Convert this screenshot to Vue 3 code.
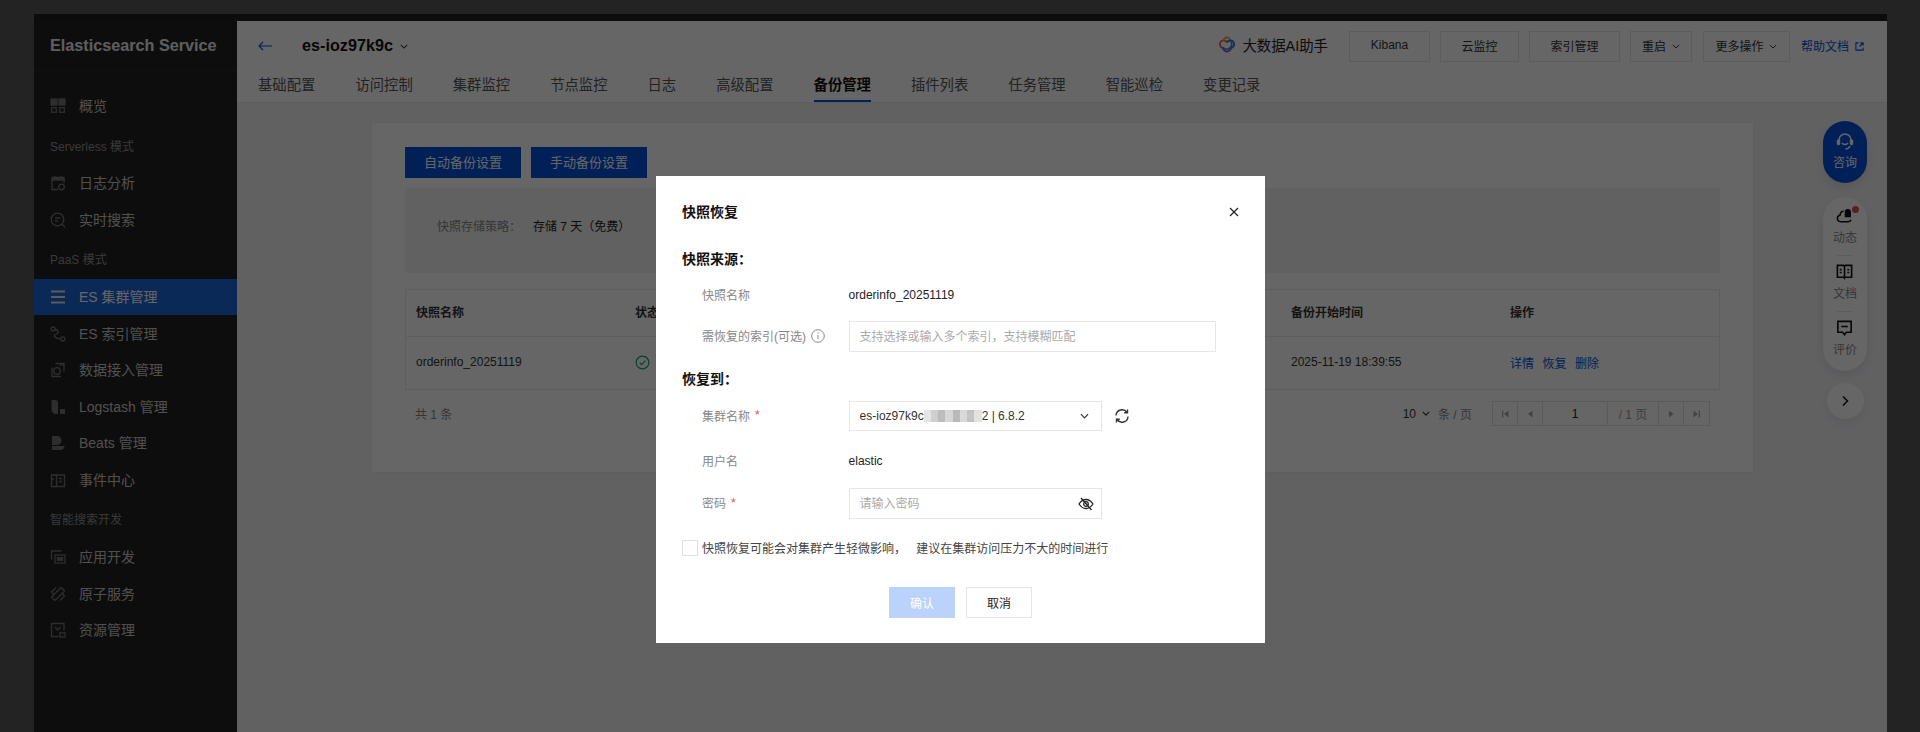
<script setup>
const icons = {
  grid: '<rect x="1" y="1" width="6" height="6" fill="currentColor"/><rect x="9" y="1" width="6" height="6" fill="currentColor"/><rect x="1.7" y="9.7" width="4.6" height="4.6"/><rect x="9.7" y="9.7" width="4.6" height="4.6"/>',
  calendar: '<path d="M2 4h12v4M2 4v10.5h6" /><path d="M2 2.5h12V5H2z" fill="currentColor"/><path d="M5 .8v2.5M11 .8v2.5"/><circle cx="11.5" cy="12" r="2.8"/>',
  search: '<circle cx="7.5" cy="7.5" r="6.3"/><path d="M12 12l3 3.4M5 6h5M5 9h3"/>',
  bars: '<path d="M1 2.5h14M1 8h14M1 13.5h14" stroke-width="2"/>',
  route: '<circle cx="3" cy="3" r="2"/><circle cx="12.8" cy="13" r="2"/><path d="M5 3.5C9 4 9 7 6 8c-3 1-2 4.500 4.800 5"/>',
  data: '<circle cx="7" cy="9" r="3.300"/><path d="M2 5.500v9h9M5.500 1.500H14v8M10 4l2-2.500 2 2.500"/>',
  logstash: '<path d="M1.500 1H5a3 3 0 0 1 3 3v11H6a4.500 4.500 0 0 1-4.500-4.500z" fill="currentColor" stroke="none"/><rect x="10" y="10" width="5" height="5" fill="currentColor" stroke="none"/>',
  beats: '<path d="M2 1h5a4.500 4.500 0 0 1 0 9H2zM2 11h12.500a3.800 3.800 0 0 1-3.800 4H2z" fill="currentColor" stroke="none"/>',
  event: '<path d="M1.500 3h13v11.500h-13zM6.500 3v11.500M9 6.500h3M9 9.500h3M1.500 7H4"/>',
  app: '<path d="M11.500 2H1.500v8.500"/><rect x="5" y="6" width="10" height="8"/><rect x="7.500" y="8.700" width="5" height="2.600" fill="currentColor"/>',
  atom: '<path d="M6 1.500 1.500 6l3 3M10 14.500 14.500 10l-3-3M1.500 11l9.500-9.500 3.500 3.500L5 14.500z"/>',
  resource: '<path d="M14 8.500V1.500H1.500v13H8.500M5 5l2.700 3L10.500 5"/><rect x="10" y="10.800" width="5" height="4.200"/>',
}

const navGroups = [
  { items: [{ label: '概览', icon: 'grid' }] },
  { title: 'Serverless 模式', items: [{ label: '日志分析', icon: 'calendar' }, { label: '实时搜索', icon: 'search' }] },
  {
    title: 'PaaS 模式',
    items: [
      { label: 'ES 集群管理', icon: 'bars', active: true },
      { label: 'ES 索引管理', icon: 'route' },
      { label: '数据接入管理', icon: 'data' },
      { label: 'Logstash 管理', icon: 'logstash' },
      { label: 'Beats 管理', icon: 'beats' },
      { label: '事件中心', icon: 'event' },
    ],
  },
  { title: '智能搜索开发', items: [{ label: '应用开发', icon: 'app' }, { label: '原子服务', icon: 'atom' }, { label: '资源管理', icon: 'resource' }] },
]

const tabs = ['基础配置', '访问控制', '集群监控', '节点监控', '日志', '高级配置', '备份管理', '插件列表', '任务管理', '智能巡检', '变更记录']
const mosaic = ['#e4e4e4', '#cfcfcf', '#bdbdbd', '#d6d6d6', '#b9b9b9', '#dadada', '#c4c4c4', '#e2e2e2']
</script>

<template>
  <div class="page">
    <div class="window">
      <div class="strip"></div>
      <div class="shell">
        <aside class="sidebar">
          <div class="brand">Elasticsearch Service</div>
          <nav class="nav">
            <div v-for="(group, i) in navGroups" :key="i" class="nav-group">
              <div v-if="group.title" class="nav-title">{{ group.title }}</div>
              <div v-for="item in group.items" :key="item.label" class="nav-item" :class="{ active: item.active }">
                <svg class="nav-icon" viewBox="0 0 16 16" fill="none" stroke="currentColor" stroke-width="1.300" v-html="icons[item.icon]"></svg>
                <span>{{ item.label }}</span>
              </div>
            </div>
          </nav>
        </aside>

        <main class="main">
          <header class="header">
            <div class="top-row">
              <svg class="back" viewBox="0 0 14 10" fill="none" stroke="currentColor" stroke-width="1.100"><path d="M14 5H1M5 1 1 5l4 4" /></svg>
              <span class="instance">es-ioz97k9c</span>
              <svg class="chev inst-chev" viewBox="0 0 10 6" fill="none" stroke="currentColor" stroke-width="1.300"><path d="M1 1l4 4 4-4" /></svg>
              <div class="top-actions">
                <svg class="ai-logo" viewBox="0 0 20 20" fill="none" stroke-width="1.800">
                  <path d="M10 6.500A3.800 3.800 0 1 0 6 12" stroke="#e8604c" />
                  <path d="M6.500 5A3.500 3.500 0 0 1 13.500 5" stroke="#f0a33a" />
                  <path d="M10 6.500A3.800 3.800 0 1 1 14 12" stroke="#2d6ee8" />
                  <path d="M6 11.500a4 4 0 1 0 8 0" stroke="#8a4fd8" />
                  <path d="M13.500 5a4 4 0 0 1-7.500 6.500" stroke="#3f7fe0" />
                </svg>
                <span class="ai-text">大数据AI助手</span>
                <button class="btn kibana"><span>Kibana</span></button>
                <button class="btn monitor"><span>云监控</span></button>
                <button class="btn index"><span>索引管理</span></button>
                <button class="btn restart"><span>重启</span><svg class="chev" viewBox="0 0 10 6" fill="none" stroke="currentColor" stroke-width="1.200"><path d="M1 1l4 4 4-4" /></svg></button>
                <button class="btn more"><span>更多操作</span><svg class="chev" viewBox="0 0 10 6" fill="none" stroke="currentColor" stroke-width="1.200"><path d="M1 1l4 4 4-4" /></svg></button>
                <a class="help"><span>帮助文档</span><svg class="ext" viewBox="0 0 10 10" fill="none" stroke="currentColor" stroke-width="1.200"><path d="M4 1H1v8h8V6M5 5l4-4M6 1h3v3" /></svg></a>
              </div>
            </div>
            <div class="tabs">
              <div v-for="tab in tabs" :key="tab" class="tab" :class="{ on: tab === '备份管理' }">{{ tab }}</div>
            </div>
          </header>

          <section class="body">
            <div class="card">
              <div class="card-actions">
                <button class="primary">自动备份设置</button>
                <button class="primary">手动备份设置</button>
              </div>
              <div class="policy">
                <span class="policy-label">快照存储策略：</span>
                <span class="policy-value">存储 7 天（免费）</span>
              </div>
              <div class="table">
                <div class="t-row t-head">
                  <div>快照名称</div>
                  <div>状态</div>
                  <div>备份开始时间</div>
                  <div>操作</div>
                </div>
                <div class="t-row t-data">
                  <div>orderinfo_20251119</div>
                  <div class="status">
                    <svg viewBox="0 0 16 16" fill="none" stroke="#00a870" stroke-width="1.200"><circle cx="8" cy="8" r="6.800" /><path d="M5 8.200l2.200 2.200L11 6" /></svg>
                  </div>
                  <div>2025-11-19 18:39:55</div>
                  <div class="links"><a>详情</a><a>恢复</a><a>删除</a></div>
                </div>
              </div>
              <div class="pager-row">
                <span class="total">共 1 条</span>
                <div class="pager-right">
                  <span class="size">10<svg class="chev" viewBox="0 0 10 6" fill="none" stroke="currentColor" stroke-width="1.500"><path d="M1 1l4 4 4-4" /></svg></span>
                  <span class="size-unit">条 / 页</span>
                  <div class="pager">
                    <div class="p-btn"><svg viewBox="0 0 10 10" fill="currentColor"><path d="M2 1.500h1.300v7H2zM8.500 1.500v7L4 5z" /></svg></div>
                    <div class="p-btn"><svg viewBox="0 0 10 10" fill="currentColor"><path d="M7.500 1.500v7L3 5z" /></svg></div>
                    <div class="p-input">1</div>
                    <div class="p-total">/ 1 页</div>
                    <div class="p-btn"><svg viewBox="0 0 10 10" fill="currentColor"><path d="M3 1.500v7L7.500 5z" /></svg></div>
                    <div class="p-btn"><svg viewBox="0 0 10 10" fill="currentColor"><path d="M8 1.500H6.700v7H8zM1.500 1.500v7L6 5z" /></svg></div>
                  </div>
                </div>
              </div>
            </div>
          </section>
        </main>
      </div>
    </div>

    <!-- right floating rail -->
    <div class="rail">
      <div class="consult">
        <svg viewBox="0 0 20 20" fill="none" stroke="currentColor" stroke-width="1.500">
          <path d="M4 9V8a6 6 0 0 1 12 0v4" />
          <rect x="2.500" y="8" width="2" height="4.500" rx="1" fill="currentColor" />
          <rect x="15.500" y="8" width="2" height="4.500" rx="1" fill="currentColor" />
          <path d="M7 11c1.500 2 4.500 2 6 0M15 14c-1 2.500-3 3-4.500 3" />
        </svg>
        <span>咨询</span>
      </div>
      <div class="rail-menu">
        <div class="rail-item">
          <span class="dot"></span>
          <svg viewBox="0 0 20 20" fill="none" stroke="currentColor" stroke-width="1.600">
            <path d="M9 5.500C6.500 5.500 5.500 7.500 5.500 9.500 3.500 10 2.500 11.500 2.500 13c0 2 1.500 3.500 3.500 3.500h8c1.500 0 2.500-1 3-2" />
            <path d="M11 10V6.500a2.500 2.500 0 0 1 5 0V11h-5z" fill="currentColor" />
          </svg>
          <span>动态</span>
        </div>
        <div class="rail-sep"></div>
        <div class="rail-item">
          <svg viewBox="0 0 20 20" fill="none" stroke="currentColor" stroke-width="1.700">
            <path d="M2.500 3.500h6.500l1 1 1-1h6.500V16h-7l-.5 1-.5-1h-7zM10 4.500V16" />
            <path d="M5 8h2M13 8h2M5 11h2M13 11h2" />
          </svg>
          <span>文档</span>
        </div>
        <div class="rail-sep"></div>
        <div class="rail-item">
          <svg viewBox="0 0 20 20" fill="none" stroke="currentColor" stroke-width="1.700">
            <path d="M3 3.500h14V15h-5l-2 2.500L8 15H3zM6.500 9h7" />
          </svg>
          <span>评价</span>
        </div>
      </div>
      <div class="rail-toggle">
        <svg viewBox="0 0 8 12" fill="none" stroke="currentColor" stroke-width="1.500"><path d="M2 1.500 6.500 6 2 10.500" /></svg>
      </div>
    </div>

    <div class="mask"></div>

    <div class="dialog">
      <div class="dialog-head">
        <span>快照恢复</span>
        <svg class="close" viewBox="0 0 10 10" fill="none" stroke="#222" stroke-width="1.200"><path d="M1 1l8 8M9 1 1 9" /></svg>
      </div>

      <div class="section s-source">快照来源：</div>
      <div class="form-row r-name">
        <label>快照名称</label>
        <span class="value">orderinfo_20251119</span>
      </div>
      <div class="form-row r-index">
        <label>需恢复的索引(可选)
          <svg class="info" viewBox="0 0 14 14" fill="none" stroke="#888" stroke-width="1"><circle cx="7" cy="7" r="6.300" /><path d="M7 6v4.200M7 3.500v1.400" /></svg>
        </label>
        <div class="field wide placeholder"><span>支持选择或输入多个索引，支持模糊匹配</span></div>
      </div>

      <div class="section s-target">恢复到：</div>
      <div class="form-row r-cluster">
        <label>集群名称<i>*</i></label>
        <div class="field select">
          <span>es-ioz97k9c</span>
          <span class="mosaic"><b v-for="(c, i) in mosaic" :key="i" :style="{ background: c }"></b></span>
          <span>2 | 6.8.2</span>
          <svg class="sel-chev" viewBox="0 0 10 6" fill="none" stroke="#333" stroke-width="1.300"><path d="M1 1l4 4 4-4" /></svg>
        </div>
        <svg class="refresh" viewBox="0 0 16 16" fill="none" stroke="#333" stroke-width="1.400">
          <path d="M2 7.500A6 6 0 0 1 13 4.500M14 8.500A6 6 0 0 1 3 11.500" />
          <path d="M13.500 1.500v3.300h-3.300M2.500 14.500v-3.300h3.300" />
        </svg>
      </div>
      <div class="form-row r-user">
        <label>用户名</label>
        <span class="value">elastic</span>
      </div>
      <div class="form-row r-pass">
        <label>密码<i>*</i></label>
        <div class="field pass placeholder">
          <span>请输入密码</span>
          <svg class="eye" viewBox="0 0 16 16" fill="none" stroke="#222" stroke-width="1.300">
            <path d="M1 8c2-3 4.300-4.500 7-4.500S13 5 15 8c-2 3-4.300 4.500-7 4.500S3 11 1 8z" />
            <circle cx="8" cy="8" r="2.300" />
            <path d="M3 2l10.500 12" />
          </svg>
        </div>
      </div>

      <div class="agree">
        <span class="box"></span>
        <span class="agree-text">快照恢复可能会对集群产生轻微影响， 建议在集群访问压力不大的时间进行</span>
      </div>

      <div class="dialog-foot">
        <button class="ok">确认</button>
        <button class="cancel">取消</button>
      </div>
    </div>
  </div>
</template>

<style scoped>
.page {
  position: relative;
  width: 1920px;
  height: 732px;
  overflow: hidden;
  box-sizing: border-box;
  padding: 14px 33px 0 34px;
  background: #585858;
  font-family: "Liberation Sans", "Noto Sans CJK SC", sans-serif;
  font-size: 12px;
  color: #333;
}

.window {
  height: 718px;
  display: flex;
  flex-direction: column;
}
.strip {
  height: 7px;
  background: #1e1e1e;
}
.shell {
  flex: 1;
  display: flex;
  min-height: 0;
}

/* sidebar */
.sidebar {
  width: 203px;
  flex-shrink: 0;
  background: #212121;
  color: #c8c8c8;
}
.brand {
  height: 50px;
  box-sizing: border-box;
  padding-left: 16px;
  line-height: 49px;
  font-size: 16.2px;
  font-weight: 700;
  color: #ebebeb;
  border-bottom: 1px solid #2c2c2c;
}
.nav {
  padding-top: 17px;
}
.nav-title {
  height: 40.5px;
  padding: 4px 0 0 16px;
  box-sizing: border-box;
  line-height: 36px;
  font-size: 12px;
  color: #8f8f8f;
}
.nav-item {
  height: 36.6px;
  display: flex;
  align-items: center;
  padding-left: 16px;
  font-size: 14px;
  gap: 13px;
}
.nav-item span {
  padding-bottom: 2px;
}
.nav-item.active {
  background: #1d66d8;
  color: #fff;
}
.nav-icon {
  width: 16px;
  height: 16px;
  color: #737373;
  flex-shrink: 0;
}
.nav-item.active .nav-icon {
  color: #e6e6e6;
}

/* header */
.main {
  flex: 1;
  display: flex;
  flex-direction: column;
  min-width: 0;
  background: #f2f3f6;
}
.header {
  background: #fff;
  border-bottom: 1px solid #e6e8ec;
  height: 81px;
  flex-shrink: 0;
}
.top-row {
  height: 50px;
  display: flex;
  align-items: center;
  padding: 0 23px 0 21px;
}
.back {
  width: 14px;
  height: 10px;
  color: #0052d9;
  margin-right: 30px;
}
.instance {
  font-size: 16.2px;
  font-weight: 700;
  color: #111;
  width: 92px;
  white-space: nowrap;
  padding-bottom: 1px;
}
.chev {
  width: 8px;
  height: 5px;
  flex-shrink: 0;
}
.inst-chev {
  margin-left: 6px;
  color: #333;
}
.top-actions {
  margin-left: auto;
  display: flex;
  align-items: center;
}
.ai-logo {
  width: 20px;
  height: 20px;
  margin-right: 5px;
}
.ai-text {
  font-size: 14.4px;
  color: #222;
  margin-right: 21px;
  padding-bottom: 3px;
}
.btn {
  height: 31px;
  padding: 0;
  border: 1px solid #e3e5ea;
  background: #fff;
  color: #333;
  font: inherit;
  display: flex;
  align-items: center;
  justify-content: center;
  gap: 6px;
  margin-right: 10px;
}
.btn span,
.help span {
  padding-bottom: 2px;
}
.kibana { width: 81px; }
.monitor { width: 79px; }
.index { width: 91px; }
.restart { width: 62px; margin-right: 11px; }
.more { width: 87px; margin-right: 11px; }
.help {
  display: flex;
  align-items: center;
  color: #0052d9;
  gap: 6px;
}
.ext {
  width: 9px;
  height: 9px;
}
.tabs {
  height: 31px;
  display: flex;
  gap: 40px;
  padding-left: 21px;
}
.tab {
  height: 31px;
  box-sizing: border-box;
  line-height: 28px;
  font-size: 14.35px;
  color: #555;
}
.tab.on {
  color: #111;
  font-weight: 700;
  border-bottom: 2px solid #0052d9;
}

/* page body */
.body {
  flex: 1;
  padding: 20px 134px 0 135px;
}
.card {
  background: #fff;
  padding: 24px 33px 46px;
  box-shadow: 0 1px 3px rgba(0, 0, 0, 0.05);
}
.card-actions {
  display: flex;
  gap: 10px;
}
.primary {
  width: 116px;
  height: 31px;
  padding: 0 0 3px;
  border: 0;
  background: #0052d9;
  color: #fff;
  font: 13px "Liberation Sans", "Noto Sans CJK SC", sans-serif;
}
.policy {
  margin-top: 10px;
  height: 85px;
  box-sizing: border-box;
  padding: 30px 0 0 32px;
  line-height: 18px;
  background: #f2f3f6;
  display: flex;
}
.policy-label {
  width: 96px;
  color: #888;
}
.policy-value {
  color: #222;
}
.table {
  margin-top: 16px;
  border: 1px solid #e6e8ec;
}
.t-row {
  display: grid;
  grid-template-columns: 219px 656px 219px 1fr;
  padding-left: 10px;
  align-items: center;
  box-sizing: border-box;
}
.t-head {
  height: 47px;
  padding-bottom: 4px;
  font-weight: 700;
  color: #333;
  border-bottom: 1px solid #e9ebef;
}
.t-data {
  height: 52px;
  padding-bottom: 2px;
  color: #333;
}
.status svg {
  display: block;
  width: 15px;
  height: 15px;
}
.links {
  display: flex;
  gap: 8.5px;
}
.links a {
  color: #0052d9;
}
.pager-row {
  margin-top: 11px;
  display: flex;
  align-items: center;
  justify-content: space-between;
  padding: 0 10px;
  height: 25px;
}
.total {
  color: #888;
  font-size: 12px;
}
.pager-right {
  display: flex;
  align-items: center;
}
.size {
  display: flex;
  align-items: center;
  gap: 6px;
  color: #333;
}
.size-unit {
  margin: 0 20px 0 8px;
  color: #888;
}
.pager {
  height: 25px;
  box-sizing: border-box;
  display: flex;
  border: 1px solid #dfe1e6;
}
.pager > div {
  box-sizing: border-box;
  display: flex;
  align-items: center;
  justify-content: center;
  border-right: 1px solid #dfe1e6;
}
.pager > div:last-child {
  border-right: 0;
}
.p-btn {
  width: 25px;
  color: #aaa;
}
.p-btn svg {
  width: 10px;
  height: 10px;
}
.p-input {
  width: 65px;
  color: #222;
}
.p-total {
  width: 51px;
  color: #999;
}

/* right rail, floats over the page */
.rail {
  position: absolute;
  top: 121px;
  left: 1823px;
  width: 44px;
  display: flex;
  flex-direction: column;
  align-items: center;
  font-size: 12px;
}
.consult {
  width: 44px;
  height: 62px;
  border-radius: 22px;
  background: #0052d9;
  color: #fff;
  display: flex;
  flex-direction: column;
  align-items: center;
  padding-top: 11px;
  box-sizing: border-box;
  gap: 1px;
  box-shadow: 0 4px 12px rgba(0, 0, 0, 0.1);
}
.consult svg {
  width: 20px;
  height: 20px;
}
.rail-menu {
  margin-top: 14px;
  width: 44px;
  height: 174px;
  box-sizing: border-box;
  padding-top: 9px;
  border-radius: 22px;
  background: #fff;
  box-shadow: 0 4px 12px rgba(0, 0, 0, 0.1);
  display: flex;
  flex-direction: column;
  align-items: center;
}
.rail-item {
  position: relative;
  display: flex;
  flex-direction: column;
  align-items: center;
  gap: 3px;
  color: #888;
}
.rail-item svg {
  width: 19px;
  height: 19px;
  color: #111;
}
.rail-sep {
  width: 16px;
  height: 1px;
  background: #e5e5e5;
  margin: 10px 0 6px;
}
.dot {
  position: absolute;
  top: 0;
  right: -2px;
  width: 7px;
  height: 7px;
  border-radius: 50%;
  background: #e34d59;
}
.rail-toggle {
  margin-top: 12px;
  width: 37px;
  height: 36px;
  border-radius: 50%;
  background: #fff;
  box-shadow: 0 4px 12px rgba(0, 0, 0, 0.08);
  display: flex;
  align-items: center;
  justify-content: center;
  color: #111;
}
.rail-toggle svg {
  width: 8px;
  height: 12px;
}

.mask {
  position: absolute;
  inset: 0;
  background: rgba(0, 0, 0, 0.6);
}

/* dialog */
.dialog {
  position: absolute;
  top: 176px;
  left: 656px;
  width: 609px;
  height: 467px;
  box-sizing: border-box;
  padding: 26px 26px 0;
  background: #fff;
  display: flex;
  flex-direction: column;
  color: #333;
}
.dialog-head {
  height: 20px;
  display: flex;
  align-items: center;
  justify-content: space-between;
  font-size: 14px;
  font-weight: 700;
  color: #111;
}
.dialog-head span {
  padding-bottom: 2px;
}
.close {
  width: 10px;
  height: 10px;
}
.section {
  height: 20px;
  line-height: 20px;
  font-size: 14px;
  font-weight: 700;
  color: #111;
}
.s-source { margin-top: 27px; }
.s-target { margin-top: 17px; }
.form-row {
  display: grid;
  grid-template-columns: 146.6px auto 1fr;
  align-items: center;
  padding-left: 20px;
  min-height: 30px;
}
.form-row label {
  color: #888;
  display: flex;
  align-items: center;
  gap: 5px;
  padding-bottom: 2px;
}
.form-row label i {
  color: #e34d59;
  font-style: normal;
}
.r-name { margin-top: 11px; }
.r-index { margin-top: 11px; }
.r-cluster { margin-top: 12px; }
.r-user { margin-top: 15px; }
.r-pass { margin-top: 12px; }
.value {
  color: #222;
}
.info {
  width: 14px;
  height: 14px;
}
.field {
  box-sizing: border-box;
  border: 1px solid #e4e6ec;
  height: 31px;
  padding-left: 10px;
  display: flex;
  align-items: center;
  background: #fff;
}
.wide { width: 367px; }
.placeholder {
  color: #aaa;
}
.placeholder span {
  padding-bottom: 2px;
}
.select {
  width: 253px;
  height: 30px;
  color: #333;
}
.mosaic {
  width: 58px;
  height: 18px;
  display: flex;
  align-items: center;
}
.mosaic b {
  flex: 1;
  height: 12px;
}
.sel-chev {
  width: 9px;
  height: 6px;
  margin-left: auto;
  margin-right: 12px;
}
.refresh {
  width: 16px;
  height: 16px;
  margin-left: 12px;
}
.pass {
  width: 253px;
}
.eye {
  width: 16px;
  height: 16px;
  margin-left: auto;
  margin-right: 7px;
}
.agree {
  margin-top: 21px;
  display: flex;
  align-items: center;
  gap: 4px;
  height: 16px;
  color: #444;
}
.agree-text {
  padding-bottom: 2px;
  word-spacing: 7px;
}
.box {
  width: 16px;
  height: 16px;
  box-sizing: border-box;
  border: 1px solid #dfe1e6;
  flex-shrink: 0;
}
.dialog-foot {
  margin-top: 31px;
  display: flex;
  justify-content: center;
  gap: 11px;
}
.dialog-foot button {
  width: 66px;
  height: 31px;
  padding: 0;
  font: 12px "Liberation Sans", "Noto Sans CJK SC", sans-serif;
}
.ok {
  border: 0;
  background: #bbd3fb;
  color: #fff;
  font-weight: 700;
}
.cancel {
  border: 1px solid #e4e6ec;
  background: #fff;
  color: #222;
}
</style>
